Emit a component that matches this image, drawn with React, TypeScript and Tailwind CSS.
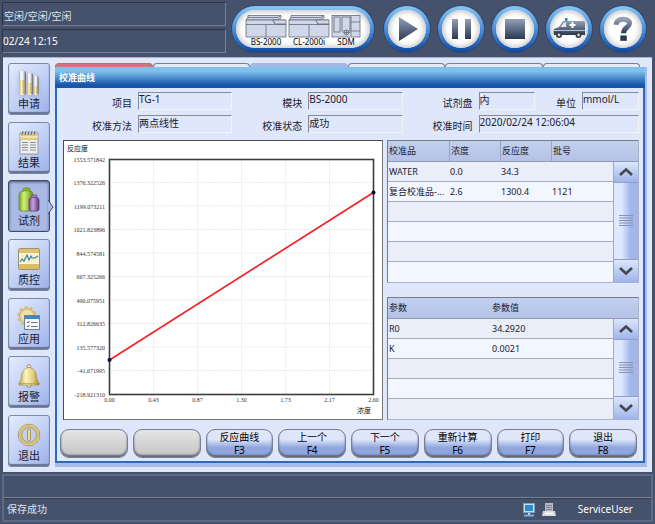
import React from "react";

const SANS = "font-['Noto_Sans','Noto_Sans_CJK_SC',sans-serif]";

const curve = {
  yTicks: ["1553.571842", "1376.322526", "1199.073211", "1021.823896", "844.574581", "667.325266", "490.075951", "312.826635", "135.577320", "-41.671995", "-218.921310"],
  xTicks: ["0.00", "0.43", "0.87", "1.30", "1.73", "2.17", "2.60"],
};

const calibrators = [
  ["WATER", "0.0", "34.3", ""],
  ["复合校准品-...", "2.6", "1300.4", "1121"],
  ["", "", "", ""],
  ["", "", "", ""],
  ["", "", "", ""],
  ["", "", "", ""],
];

const params = [
  ["R0", "34.2920"],
  ["K", "0.0021"],
  ["", ""],
  ["", ""],
  ["", ""],
];

const actions = [
  { label: "", key: "" },
  { label: "", key: "" },
  { label: "反应曲线", key: "F3" },
  { label: "上一个", key: "F4" },
  { label: "下一个", key: "F5" },
  { label: "重新计算", key: "F6" },
  { label: "打印", key: "F7" },
  { label: "退出", key: "F8" },
];

/* ---------- sidebar icons ---------- */

const TubesIcon = () => (
  <svg width="22" height="26" viewBox="0 0 22 26" className="drop-shadow-sm">
    <defs>
      <linearGradient id="tube" x1="0" x2="1">
        <stop offset="0" stopColor="#a3a6ae" />
        <stop offset="0.3" stopColor="#ffffff" />
        <stop offset="0.6" stopColor="#e4e5e8" />
        <stop offset="1" stopColor="#5e626b" />
      </linearGradient>
      <linearGradient id="serum" x1="0" x2="1">
        <stop offset="0" stopColor="#d9c07c" />
        <stop offset="0.4" stopColor="#fff2bd" />
        <stop offset="1" stopColor="#b79a4c" />
      </linearGradient>
    </defs>
    <rect x="1" y="1" width="7" height="24" rx="2" fill="url(#tube)" />
    <rect x="1.5" y="10" width="5" height="14" rx="1" fill="url(#serum)" />
    <rect x="9" y="3" width="6" height="22" rx="2" fill="url(#tube)" />
    <rect x="9.5" y="13" width="4" height="11" rx="1" fill="url(#serum)" />
    <rect x="15.5" y="6" width="5" height="19" rx="2" fill="url(#tube)" />
    <rect x="16" y="16" width="3.4" height="8" rx="1" fill="url(#serum)" />
  </svg>
);

const ReportIcon = () => (
  <svg width="22" height="26" viewBox="0 0 22 26">
    <rect x="2" y="4" width="18" height="21" fill="#eceded" stroke="#85888c" strokeWidth="0.8" />
    <rect x="2.4" y="5" width="17.2" height="6" fill="#e0cb7b" />
    <path d="M2.5 8H19.5" stroke="#f6edbd" strokeWidth="1.5" />
    <path d="M4 6l1-4M7 6l1-4M10 6l1-4M13 6l1-4M16 6l1-4" stroke="#686b61" strokeWidth="1" />
    <path d="M4 13.5H10M12 13.5H18M4 16H10M12 16H18M4 18.5H10M12 18.5H18M4 21H10M12 21H18" stroke="#8d9298" strokeWidth="1" />
  </svg>
);

const ReagentIcon = () => (
  <svg width="24" height="26" viewBox="0 0 24 26">
    <defs>
      <linearGradient id="green" x1="0" x2="1">
        <stop offset="0" stopColor="#6fa51b" />
        <stop offset="0.35" stopColor="#d5ef7a" />
        <stop offset="1" stopColor="#5b9313" />
      </linearGradient>
      <linearGradient id="purple" x1="0" x2="1">
        <stop offset="0" stopColor="#7b4d9c" />
        <stop offset="0.4" stopColor="#c7a1df" />
        <stop offset="1" stopColor="#583479" />
      </linearGradient>
    </defs>
    <rect x="6" y="1" width="7" height="4" rx="1.5" fill="#86bb2a" stroke="#527b15" strokeWidth="0.6" />
    <path d="M3 5Q8 3 14 4Q16 5 16 8V22Q16 24 13 24H5Q2 24 2 22V8Z" fill="url(#green)" stroke="#5b8a1c" strokeWidth="0.7" />
    <rect x="14" y="8" width="6" height="3" rx="1" fill="#a57bc0" stroke="#5a3a74" strokeWidth="0.6" />
    <path d="M12 12Q16 9 21 11Q22 12 22 13V22Q22 24 19 24H14Q12 24 12 22Z" fill="url(#purple)" stroke="#57386f" strokeWidth="0.7" />
  </svg>
);

const QcIcon = () => (
  <svg width="24" height="26" viewBox="0 0 24 26">
    <rect x="1.5" y="2.5" width="21" height="21" rx="1" fill="#f5efcb" stroke="#9b9474" />
    <rect x="2" y="3" width="20" height="4" fill="#dec26e" />
    <rect x="2" y="18" width="20" height="5" fill="#dbbd68" />
    <path d="M2 8H22M2 17.5H22" stroke="#fff9df" strokeWidth="1.2" />
    <path d="M3 16L5 13L7 15L10 9L12 14L14 10L15 12L18 12L21 10" fill="none" stroke="#2c82a8" strokeWidth="1.1" />
  </svg>
);

const AppIcon = () => (
  <svg width="26" height="26" viewBox="0 0 26 26">
    <circle cx="11" cy="11" r="7.5" fill="#e5d18c" stroke="#a59259" strokeWidth="0.6" />
    <circle cx="11" cy="11" r="8.6" fill="none" stroke="#d6be73" strokeWidth="2.6" strokeDasharray="3 2.4" />
    <circle cx="11" cy="11" r="6" fill="#efdfa2" />
    <rect x="8.5" y="10.5" width="15" height="14" fill="#f5f7f8" stroke="#71828f" />
    <rect x="9" y="11" width="14" height="3" fill="#3f86c7" />
    <path d="M11 17l1 1 1.5-2M11 21l1 1 1.5-2" fill="none" stroke="#59646c" />
    <path d="M15 17.5H21.5M15 21.5H21.5" stroke="#69757e" />
  </svg>
);

const BellIcon = () => (
  <svg width="24" height="26" viewBox="0 0 24 26">
    <defs>
      <linearGradient id="bell" x1="0" x2="1">
        <stop offset="0" stopColor="#b99b47" />
        <stop offset="0.35" stopColor="#fff3be" />
        <stop offset="0.7" stopColor="#e3cc7a" />
        <stop offset="1" stopColor="#9c8035" />
      </linearGradient>
    </defs>
    <circle cx="12" cy="3.5" r="1.8" fill="#f2ead0" stroke="#8e7d4a" strokeWidth="0.8" />
    <circle cx="12" cy="22.5" r="2" fill="#efe9d4" stroke="#7f7554" strokeWidth="0.8" />
    <path d="M12 4.5C7 5 5 9 4.5 13C4 17 3.5 18.5 1.5 20.5Q1.5 22 3 22H21Q22.5 22 22.5 20.5C20.500 18.500 20 17 19.500 13C19 9 17 5 12 4.500Z" fill="url(#bell)" stroke="#94803f" strokeWidth="0.6" />
    <path d="M3 20.5H21" stroke="#b79a4b" strokeWidth="0.7" />
  </svg>
);

const PowerIcon = () => (
  <svg width="24" height="26" viewBox="0 0 24 26">
    <circle cx="12" cy="13" r="10.8" fill="#f6f2e2" stroke="#8b8469" strokeWidth="0.8" />
    <circle cx="12" cy="13" r="9" fill="#c3cfea" stroke="#dcc066" strokeWidth="2.4" />
    <circle cx="12" cy="13" r="7.3" fill="none" stroke="#8f854f" strokeWidth="0.6" />
    <rect x="10.5" y="7.5" width="3" height="11" rx="1" fill="#edd98b" stroke="#8a7d49" strokeWidth="0.7" />
  </svg>
);

const menu = [
  { label: "申请", icon: <TubesIcon /> },
  { label: "结果", icon: <ReportIcon /> },
  { label: "试剂", icon: <ReagentIcon />, active: true },
  { label: "质控", icon: <QcIcon /> },
  { label: "应用", icon: <AppIcon /> },
  { label: "报警", icon: <BellIcon /> },
  { label: "退出", icon: <PowerIcon /> },
];

/* ---------- header ---------- */

const Analyzer = () => (
  <svg width="42" height="24" viewBox="0 0 42 24" fill="#d0d7e8" stroke="#646a78" strokeWidth="0.8">
    <path d="M1 6L3 3V1.5H36V4L32 6Z" />
    <path d="M3 3.5H33L36 1.5M27 6H41" fill="none" />
    <path d="M1 6H28L30 10H41V23H1Z" />
    <path d="M28 6H41V10H30Z" />
    <path d="M1 10.5H41M21 10.5V23" fill="none" />
  </svg>
);

const SdmUnit = () => (
  <svg width="30" height="24" viewBox="0 0 30 24" fill="#d0d7e8" stroke="#646a78" strokeWidth="0.8">
    <rect x="1" y="1.5" width="28" height="21.5" />
    <rect x="3" y="3" width="6" height="15" />
    <rect x="11" y="3" width="8" height="14" />
    <path d="M20 2V22M20 8H29M20 17H29" fill="none" />
    <circle cx="15.5" cy="18.5" r="2.3" />
    <path d="M12 18.5H19M15.5 16V21.5" />
  </svg>
);

const RoundButton = ({ name, children }: { name: string; children: React.ReactNode }) => (
  <button aria-label={name} className="size-[46px] shrink-0 rounded-full bg-linear-to-b from-[#86c6f2] via-[#4d90d8] to-[#0f4ba6] p-1 shadow-[0_0_0_1px_#34466a]">
    <span className="flex size-full items-center justify-center rounded-full bg-white shadow-[inset_0_0_5px_2px_#c9c9cc]">
      {children}
    </span>
  </button>
);

const Header = () => (
  <header className="flex h-[57px] shrink-0 items-start pr-[9px] pl-[2px]">
    <div className="flex w-56 flex-col gap-[3px] pt-[2px] text-[10px] text-white">
      <div className="flex h-6 items-center border border-t-[#2a3347] border-l-[#2a3347] border-r-[#77809a] border-b-[#77809a] pt-1 pl-px text-[#dde1e8]">空闲/空闲/空闲</div>
      <div className="flex h-6 items-center border border-t-[#2a3347] border-l-[#2a3347] border-r-[#77809a] border-b-[#77809a]">02/24 12:15</div>
    </div>
    <div className="ml-auto flex gap-2 pt-[6px]">
      <button aria-label="BS-2000 CL-2000i SDM" className="mr-[2px] h-[46px] w-[142px] rounded-full bg-linear-to-b from-[#86c6f2] via-[#4d90d8] to-[#0f4ba6] p-1 shadow-[0_0_0_1px_#34466a]">
        <span className="flex size-full items-center justify-center gap-px rounded-full bg-white text-[8px] leading-[8px] text-black shadow-[inset_0_0_5px_2px_#c9c9cc]">
          <span className="flex w-[42px] flex-col items-center pt-px"><Analyzer />BS-2000</span>
          <span className="flex w-[42px] flex-col items-center pt-px"><Analyzer />CL-2000i</span>
          <span className="flex w-[30px] flex-col items-center pt-px"><SdmUnit />SDM</span>
        </span>
      </button>
      <svg width="0" height="0" className="absolute">
        <defs>
          <linearGradient id="steel" x1="0" y1="0" x2="0" y2="1">
            <stop offset="0" stopColor="#93a0b8" />
            <stop offset="1" stopColor="#2b3852" />
          </linearGradient>
        </defs>
      </svg>
      <RoundButton name="开始">
        <svg width="24" height="24" viewBox="0 0 24 24"><path d="M4 0L23 12L4 24Z" fill="url(#steel)" /></svg>
      </RoundButton>
      <RoundButton name="暂停">
        <svg width="24" height="24" viewBox="0 0 24 24"><path d="M3 2H9V22H3ZM16 2H22V22H16Z" fill="url(#steel)" /></svg>
      </RoundButton>
      <RoundButton name="停止">
        <svg width="24" height="24" viewBox="0 0 24 24"><rect x="2" y="2" width="20" height="20" fill="url(#steel)" /></svg>
      </RoundButton>
      <RoundButton name="急诊">
        <svg width="34" height="22" viewBox="0 0 34 22">
          <rect x="13" y="0" width="2.5" height="3" fill="#2383e6" />
          <path d="M2 11L7 9L11 3H32Q33 3 33 5V17H2Q1 14 2 11Z" fill="url(#steel)" />
          <path d="M8.5 9L12 4.5H14V9Z" fill="#e3e8ef" />
          <path d="M2 12.5H33" stroke="#c3cbda" strokeWidth="0.9" />
          <path d="M20.5 4V10M17.5 7H23.5" stroke="#fff" strokeWidth="2" />
          <circle cx="7" cy="17" r="3" fill="#37383b" /><circle cx="7" cy="17" r="1.4" fill="#d7d2c7" />
          <circle cx="26.5" cy="17" r="3" fill="#37383b" /><circle cx="26.5" cy="17" r="1.4" fill="#d7d2c7" />
        </svg>
      </RoundButton>
      <RoundButton name="帮助">
        <svg width="22" height="28" viewBox="0 0 20 26">
          <path d="M3.5 9C4 5 6.5 4 10 4C14 4 16 5.5 16 8C16 11.5 10.5 11.5 10.5 17" fill="none" stroke="url(#steel)" strokeWidth="4.6" />
          <rect x="7.5" y="19" width="6" height="5" fill="#2b3852" />
        </svg>
      </RoundButton>
    </div>
  </header>
);

/* ---------- dialog ---------- */

const Field = ({ id, label, value, className = "" }: { id: string; label: string; value: string; className?: string }) => (
  <>
    <label htmlFor={id} className="shrink-0 pt-[3px] text-right text-[10px] leading-4">{label}</label>
    <input
      id={id}
      readOnly
      defaultValue={value}
      className={`h-[18px] min-w-0 border border-t-[#888b95] border-l-[#888b95] border-r-[#f4f3f3] border-b-[#f4f3f3] bg-[#dfe7fa] pb-1 text-[10px] leading-3 outline-none ${className}`}
    />
  </>
);

const CurveChart = () => (
  <svg viewBox="1 1 318 277" className="size-full border border-t-[#4d4d50] border-l-[#4d4d50] border-r-[#77777a] border-b-[#77777a] bg-white">
    <g stroke="#e9e9e9" strokeWidth="1" strokeDasharray="2 1">
      {curve.yTicks.slice(1, -1).map((t, i) => <path key={t} d={`M46 ${42 + i * 23.5}H311`} />)}
      {curve.xTicks.slice(1, -1).map((t, i) => <path key={t} d={`M${90.5 + i * 44} 19V254`} />)}
    </g>
    <rect x="46.5" y="19" width="264" height="235" fill="none" stroke="#3c3c3c" strokeWidth="1.6" />
    <g className="font-['Liberation_Serif',serif] text-[6px]" fill="#333">
      {curve.yTicks.map((t, i) => <text key={t} x="42" y={21 + i * 23.5} textAnchor="end">{t}</text>)}
      {curve.xTicks.map((t, i) => <text key={t} x={46.5 + i * 44} y="261" textAnchor="middle">{t}</text>)}
    </g>
    <g className="text-[7px]" fill="#111">
      <text x="4" y="10">反应度</text>
      <text x="294" y="272">浓度</text>
    </g>
    <path d="M46.5 219.5L310.5 52" stroke="#f5222a" strokeWidth="1.7" />
    <circle cx="46.5" cy="219.5" r="2" fill="#0b0b3a" />
    <circle cx="310.5" cy="52" r="2" fill="#0b0b3a" />
  </svg>
);

const Chevron = ({ d }: { d: string }) => (
  <svg width="16" height="10" viewBox="0 0 16 10" fill="none" stroke="#46484e" strokeWidth="2.6"><path d={d} /></svg>
);

const ScrollBar = () => (
  <div className="flex h-full flex-col border-l border-[#9aa9cf]">
    <button aria-label="向上" className="flex h-[21px] items-center justify-center border-b border-[#8f9fc9] bg-linear-to-b from-[#dce6fc] to-[#a0b4ea]">
      <Chevron d="M2 8L8 2.5L14 8" />
    </button>
    <div className="flex flex-1 items-center justify-center bg-linear-to-r from-[#dfe8fd] from-30% to-[#a2b6ea] to-70%">
      <svg width="14" height="12" viewBox="0 0 14 12" stroke="#8793b0"><path d="M0 .5H14M0 3H14M0 5.5H14M0 8H14M0 10.5H14" /></svg>
    </div>
    <button aria-label="向下" className="flex h-[23px] items-center justify-center border-t border-[#8f9fc9] bg-linear-to-b from-[#dce6fc] to-[#a0b4ea]">
      <Chevron d="M2 2L8 7.5L14 2" />
    </button>
  </div>
);

const DataTable = ({ heads, rows, widths }: { heads: string[]; rows: string[][]; widths: string[] }) => (
  <table className="w-full table-fixed border-separate border-spacing-0 border border-t-[#777b88] border-l-[#777b88] border-r-[#aab3ca] border-b-[#aab3ca] text-left text-[9px] leading-3">
    <colgroup>
      {widths.map((w, i) => <col key={i} className={w} />)}
      <col className="w-[25px]" />
    </colgroup>
    <thead>
      <tr className="h-[21px]">
        {heads.map((h, i) => (
          <th key={h} colSpan={i === heads.length - 1 ? 2 : 1} className={`border-b border-b-[#8f9ab9] bg-linear-to-b from-[#c3d0ee] to-[#b3c2e6] p-0 pl-px font-normal ${i > 0 && heads.length > 2 ? "border-l border-l-[#96a4c8]" : ""}`}>{h}</th>
        ))}
      </tr>
    </thead>
    <tbody>
      {rows.map((row, r) => (
        <tr key={r} className={`h-5 ${r % 2 ? "bg-[#f2f6ff]" : "bg-[#e9eef9]"}`}>
          {row.map((cell, c) => (
            <td key={c} className={`h-5 overflow-hidden p-0 pl-px whitespace-nowrap ${r < rows.length - 1 ? "border-b border-[#a5abba]" : ""}`}>{cell}</td>
          ))}
          {r === 0 && <td rowSpan={rows.length} className="h-px p-0"><ScrollBar /></td>}
        </tr>
      ))}
    </tbody>
  </table>
);

const CalibrationDialog = () => (
  <section className="flex flex-1 flex-col border-r-2 border-b-4 border-[#a9bce9]">
    <div className="flex flex-1 flex-col border-x-2 border-b-2 border-[#3069bb] bg-[#dfe7fa]">
      <h1 className="-mx-[2px] flex h-[21px] items-center bg-linear-to-b from-[#7fc0ec] from-20% to-[#1856ab] to-85% pl-1 text-[9px] font-bold text-white">校准曲线</h1>
      <div className="flex flex-1 flex-col pt-1 pr-1 pb-[3px] pl-[3px]">
        <form className="grid auto-rows-[20px] grid-cols-[72px_94fr_64px_94fr_64px_160fr] gap-x-[6px] gap-y-[3px]">
          <Field id="item" label="项目" value="TG-1" />
          <Field id="module" label="模块" value="BS-2000" />
          <label htmlFor="tray" className="pt-[3px] text-right text-[10px] leading-4">试剂盘</label>
          <div className="flex justify-between gap-[6px]">
            <input id="tray" readOnly defaultValue="内" className="h-[18px] w-14 border border-t-[#888b95] border-l-[#888b95] border-r-[#f4f3f3] border-b-[#f4f3f3] bg-[#dfe7fa] pb-1 text-[10px] leading-3 outline-none" />
            <div className="flex gap-[6px]"><Field id="unit" label="单位" value="mmol/L" className="w-[57px]" /></div>
          </div>
          <Field id="method" label="校准方法" value="两点线性" />
          <Field id="status" label="校准状态" value="成功" />
          <Field id="time" label="校准时间" value="2020/02/24 12:06:04" />
        </form>
        <div className="mt-[5px] grid flex-1 grid-cols-[320fr_252fr] gap-1 pl-[3px]">
          <CurveChart />
          <div className="flex flex-col justify-between">
            <DataTable heads={["校准品", "浓度", "反应度", "批号"]} rows={calibrators} widths={["w-[61px]", "w-[51px]", "w-[51px]", ""]} />
            <DataTable heads={["参数", "参数值"]} rows={params} widths={["w-[103px]", ""]} />
          </div>
        </div>
        <div className="mt-[9px] grid grid-cols-8 gap-[5px] pr-[2px]">
          {actions.map((a, i) => (
            <button
              key={i}
              disabled={!a.label}
              className={`flex h-[29px] flex-col items-center justify-center rounded-[9px] border border-[#777f93] text-[10px] leading-[13px] text-black shadow-[inset_0_-2px_2px_#59657e] ${a.label ? "bg-linear-to-b from-[#dfe6f9] from-35% to-[#91a6df] to-65%" : "bg-linear-to-b from-[#e5e5e5] to-[#c3c3c3]"}`}
            >
              <span>{a.label}</span>
              <span>{a.key}</span>
            </button>
          ))}
        </div>
      </div>
    </div>
  </section>
);

const tabs = [
  "border-[#b96b71] bg-[#d27579]",
  "border-[#7b8091] bg-[#e3eafb]",
  "border-[#a4b7e5] bg-[#a4b7e5]",
  "border-[#7b8091] bg-[#e3eafb]",
  "border-[#7b8091] bg-[#e3eafb]",
  "border-[#7b8091] bg-[#e3eafb]",
];

export default function App() {
  return (
    <div className={`flex min-h-screen flex-col bg-[#46516b] text-[#1c2030] ${SANS}`}>
      <Header />
      <main className="mx-[3px] flex flex-1 gap-[5px] border-t border-[#aab4cf] bg-[#dfe7fa] p-[5px]">
        <nav className="flex w-[42px] shrink-0 flex-col justify-between">
          {menu.map((m, i) => (
            <button
              key={i}
              className={`relative flex h-[52px] flex-col items-center justify-end rounded-[3px] border pb-[3px] text-[11px] leading-[15px] ${m.active ? "border-[#3e4964] bg-[#a9b9e5] shadow-[inset_0_1px_3px_#46516b]" : "border-[#7d88a3] bg-linear-135 from-[#e3ebfd] via-[#c3d1f5] to-[#9db1e8] shadow-[inset_0_-2px_1px_#65728f]"}`}
            >
              {m.icon}
              {m.label}
              {m.active && (
                <svg width="6" height="16" viewBox="0 0 6 16" className="absolute top-[18px] -right-[5px]">
                  <path d="M0 1L5 8L0 15" fill="#a9b9e5" stroke="#3e4964" />
                </svg>
              )}
            </button>
          ))}
        </nav>
        <div className="flex flex-1 flex-col">
          <div aria-hidden className="mr-[7px] grid h-[4px] grid-cols-6">
            {tabs.map((t, i) => <div key={i} className={`rounded-t-[5px] border border-b-0 ${t}`} />)}
          </div>
          <CalibrationDialog />
        </div>
      </main>
      <footer className="mx-[2px] mt-[2px] mb-[2px] shrink-0 border-2 border-[#5f6a84] text-[10px] text-white">
        <div className="h-[22px] border-b border-[#77819a]" />
        <div className="flex h-[22px] items-center border-t border-[#323c52] pr-[18px] pl-[3px]">
          <span className="text-[#dfe2e9]">保存成功</span>
          <svg width="12" height="14" viewBox="0 0 12 14" className="ml-auto">
            <rect x="0.5" y="0.5" width="11" height="9" fill="#c7ddec" stroke="#8aa0b2" />
            <rect x="2" y="2" width="8" height="6" fill="#288bd5" />
            <path d="M5 10H7V12H5Z" fill="#dfe5e9" />
            <path d="M1 12.5H11" stroke="#66b7ef" strokeWidth="2" />
          </svg>
          <svg width="14" height="14" viewBox="0 0 14 14" className="ml-[7px]">
            <rect x="3" y="0" width="8" height="9" fill="#b5bac3" />
            <path d="M4 2.5H10M4 4.5H10M4 6.5H10" stroke="#7b8390" />
            <path d="M1 8H13L14 13H0Z" fill="#d8dadd" />
            <path d="M3 10.5H11" stroke="#fff" strokeWidth="1.5" />
          </svg>
          <span className="ml-[22px]">ServiceUser</span>
        </div>
      </footer>
    </div>
  );
}
